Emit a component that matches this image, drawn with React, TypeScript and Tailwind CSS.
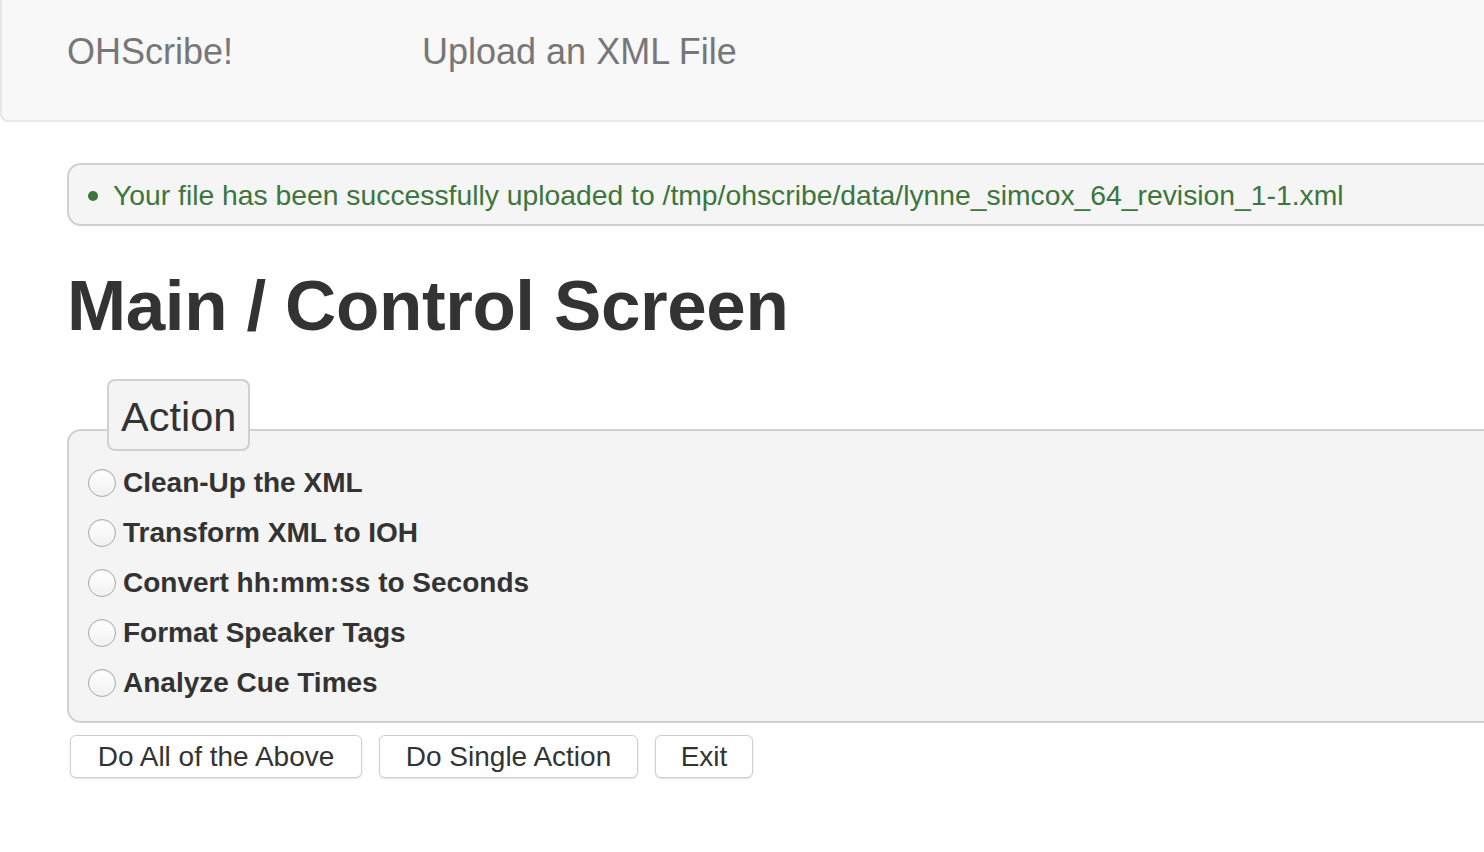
import React from "react";

const actions = [
  "Clean-Up the XML",
  "Transform XML to IOH",
  "Convert hh:mm:ss to Seconds",
  "Format Speaker Tags",
  "Analyze Cue Times",
];

const buttons = [
  { label: "Do All of the Above", w: "w-[292px]" },
  { label: "Do Single Action", w: "w-[259px]" },
  { label: "Exit", w: "w-[98px]" },
];

function Radio() {
  return (
    <span className="inline-block w-[28px] h-[28px] rounded-full border border-[#a9a9a9] bg-gradient-to-b from-[#ffffff] to-[#f1f1f1] shadow-[inset_0_1px_1px_rgba(0,0,0,0.08)] shrink-0" />
  );
}

export default function App() {
  return (
    <div
      className="w-full h-[852px] overflow-hidden bg-white text-[#333]"
      style={{ fontFamily: '"Liberation Sans", Arial, Helvetica, sans-serif' }}
    >
      <div className="h-[122px] -mr-6 bg-[#f8f8f8] border-b-2 border-l-2 border-[#e7e7e7] rounded-bl-[8px] flex items-start pt-[30px] pl-[65px]">
        <span className="text-[36px] leading-[44px] text-[#777] w-[355px]">OHScribe!</span>
        <span className="text-[36px] leading-[44px] text-[#777]">Upload an XML File</span>
      </div>

      <div className="pl-[67px]">
        <div className="mt-[41px] -mr-6 h-[63px] bg-[#f5f5f5] border-2 border-[#d0d0d0] rounded-l-[14px] flex items-center pl-[19px]">
          <span className="w-[10px] h-[10px] rounded-full bg-[#3c763d] mr-[15px] mt-[2px]" />
          <span className="text-[28.3px] leading-[34px] text-[#3c763d]">
            Your file has been successfully uploaded to /tmp/ohscribe/data/lynne_simcox_64_revision_1-1.xml
          </span>
        </div>

        <h1 className="mt-[40px] text-[71px] leading-[80px] font-bold text-[#333] tracking-[-0.4px]">
          Main / Control Screen
        </h1>

        <div className="mt-[33px] flex flex-col">
          <div className="relative z-10 ml-[40px] self-start h-[72px] px-[12px] bg-[#f4f4f4] border-2 border-[#d0d0d0] rounded-[8px] -mb-[22px] flex items-center">
            <span className="text-[41.5px] leading-[50px] text-[#333] mt-[3px]">Action</span>
          </div>
          <div className="-mr-6 h-[294px] bg-[#f4f4f4] border-2 border-[#d0d0d0] rounded-l-[14px] pt-[27px] pl-[19px] flex flex-col">
            {actions.map((a) => (
              <label key={a} className="flex items-center h-[50px] gap-[7px]">
                <Radio />
                <span className="text-[28px] leading-[34px] font-bold text-[#333]">{a}</span>
              </label>
            ))}
          </div>
        </div>

        <div className="mt-[12px] ml-[3px] flex gap-[17px]">
          {buttons.map((b) => (
            <button
              key={b.label}
              className={`${b.w} h-[43px] bg-white border border-[#cfcfcf] rounded-[6px] shadow-[0_1px_2px_rgba(0,0,0,0.12)] text-[28px] leading-[34px] text-[#333] text-center`}
            >
              {b.label}
            </button>
          ))}
        </div>
      </div>
    </div>
  );
}
